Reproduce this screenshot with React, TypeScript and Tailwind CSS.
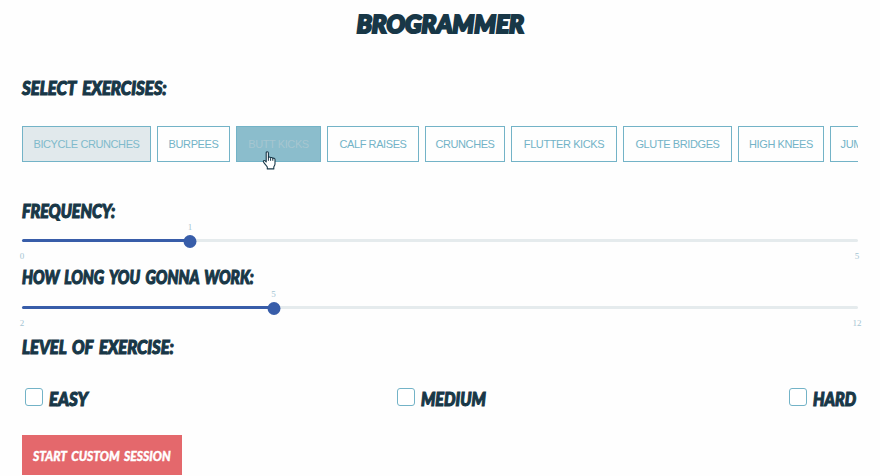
import React from 'react';

const comic =
  "font-['Lato','Open_Sans',sans-serif] font-black italic uppercase whitespace-nowrap leading-none text-[#183747] [stroke-linejoin:round]";

const exercises = [
  { name: 'Bicycle Crunches', style: 'w-[129px] bg-[#e1e9ec] text-[#7fbacb]' },
  { name: 'Burpees', style: 'w-[73px] text-[#73b3c7]' },
  { name: 'Butt Kicks', style: 'w-[85px] bg-[#8bbdcc] text-[#a6c6d0]' },
  { name: 'Calf Raises', style: 'w-[92px] text-[#73b3c7]' },
  { name: 'Crunches', style: 'w-[80px] text-[#73b3c7]' },
  { name: 'Flutter Kicks', style: 'w-[106px] text-[#73b3c7]' },
  { name: 'Glute Bridges', style: 'w-[109px] text-[#73b3c7]' },
  { name: 'High Knees', style: 'w-[86px] text-[#73b3c7]' },
  { name: 'Jumping Jacks', style: 'w-[104px] text-[#73b3c7]' },
];

function Heading({ children, className }: { children: React.ReactNode; className: string }) {
  return (
    <h2 className={`h-[20px] text-[18px] [-webkit-text-stroke:1.1px_#183747] ${comic}`}>
      <span className={`inline-block origin-left ${className}`}>{children}</span>
    </h2>
  );
}

function Slider({ min, max, value }: { min: number; max: number; value: number }) {
  const percent = ((value - min) / (max - min)) * 100;
  return (
    <div className="relative h-[3px] w-full rounded-full bg-[#e5ebed] font-['Liberation_Serif',serif] text-[9px] leading-none text-[#a5c5d3]">
      <div className="h-full rounded-full bg-[#385da9]" style={{ width: `${percent}%` }} />
      <div
        className="absolute top-1/2 ml-[0.8px] size-[13px] -translate-x-1/2 -translate-y-[6px] rounded-full bg-[#385da9]"
        style={{ left: `${percent}%` }}
      />
      <span className="absolute -top-[16px] ml-[0.8px] -translate-x-1/2" style={{ left: `${percent}%` }}>
        {value}
      </span>
      <span className="absolute left-0 top-[13px] -translate-x-1/2">{min}</span>
      <span className="absolute left-full top-[13px] -ml-px -translate-x-1/2">{max}</span>
    </div>
  );
}

function Level({ name, className }: { name: string; className: string }) {
  return (
    <label className="flex h-[20px] items-center">
      <span className="size-[18px] shrink-0 rounded-[3px] border border-[#73b3c7] bg-white" />
      <span
        className={`ml-[6px] mt-[4px] origin-left text-[18px] [-webkit-text-stroke:1.1px_#183747] ${comic} ${className}`}
      >
        {name}
      </span>
    </label>
  );
}

function HandCursor() {
  return (
    <svg className="absolute left-[25px] top-[24px]" width="16" height="20" viewBox="0 0 16 20">
      <path
        d="M4.2 1.8c0-1.5 2.2-1.5 2.2 0v5c.2-1.1 2.1-1 2.2.3.4-1 2.1-.8 2.2.5.6-.8 2.2-.4 2.2 1v4.1c0 1.4-.8 2.3-1.2 3.4v1.8H5.3v-1.8c-.7-1.5-2.4-3-3.7-4.8-.9-1.3.5-2.4 1.6-1.4l1 1z"
        fill="#fff"
        stroke="#183747"
        strokeWidth="1.1"
        strokeLinejoin="round"
      />
      <path d="M6.4 6.8v3M8.6 7.4v2.4M10.8 7.8v2" stroke="#183747" strokeWidth="1" fill="none" />
    </svg>
  );
}

export default function App() {
  return (
    <main className="flex h-[476px] w-[880px] flex-col overflow-hidden bg-[#fefefe] px-[22px]">
      <h1 className={`mt-[11px] h-[29px] text-center text-[25px] [-webkit-text-stroke:2.2px_#183747] ${comic}`}>
        <span className="inline-block scale-x-[0.98]">Brogrammer</span>
      </h1>

      <div className="mt-[39px]">
        <Heading className="scale-x-[0.93] [word-spacing:3px]">Select Exercises:</Heading>
      </div>
      <div className="mt-[27px] flex h-[36px] gap-[6px] overflow-x-clip">
        {exercises.map((item) => (
          <button
            key={item.name}
            className={`relative flex h-[36px] shrink-0 items-center justify-center whitespace-nowrap border border-[#73b3c7] font-['Liberation_Sans',sans-serif] text-[11px] uppercase tracking-[-0.4px] ${item.style}`}
          >
            {item.name}
            {item.name === 'Butt Kicks' && <HandCursor />}
          </button>
        ))}
      </div>

      <div className="mt-[40px]">
        <Heading className="scale-x-[0.89]">Frequency:</Heading>
      </div>
      <div className="mt-[17px]">
        <Slider min={0} max={5} value={1} />
      </div>

      <div className="mt-[26px]">
        <Heading className="scale-x-[0.85] [word-spacing:2.5px]">How Long You Gonna Work:</Heading>
      </div>
      <div className="mt-[18px]">
        <Slider min={2} max={12} value={5} />
      </div>

      <div className="mt-[29px]">
        <Heading className="scale-x-[0.92] [word-spacing:2.5px]">Level of Exercise:</Heading>
      </div>
      <div className="mt-[29px] flex justify-between pl-[3px]">
        <Level name="Easy" className="w-[43px] scale-x-[0.94]" />
        <Level name="Medium" className="w-[64px] scale-x-[0.9]" />
        <Level name="Hard" className="w-[45px] scale-x-[0.89]" />
      </div>

      <button className="mt-[28px] flex h-[40px] w-[160px] shrink-0 items-center bg-[#e4686c] pl-[11px]">
        <span
          className={`mt-[3px] origin-left scale-x-[0.95] text-[12.7px] [word-spacing:2px] [-webkit-text-stroke:0.4px_#fff] ${comic} !text-white`}
        >
          Start Custom Session
        </span>
      </button>
    </main>
  );
}
